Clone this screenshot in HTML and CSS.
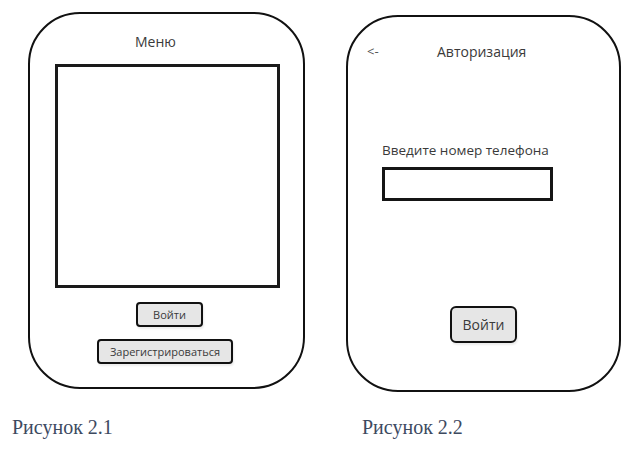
FILE: index.html
```html
<!DOCTYPE html>
<html lang="ru">
<head>
<meta charset="utf-8">
<link rel="stylesheet" href="styles.css">
</head>
<body>
<div class="page">
  <div class="fig fig1">
    <div class="phone phone1">
      <div class="title">Меню</div>
      <div class="square"></div>
      <div class="btn btn-login">Войти</div>
      <div class="btn btn-reg">Зарегистрироваться</div>
    </div>
  </div>
  <div class="fig fig2">
    <div class="phone phone2">
      <div class="header">
        <span class="back">&lt;-</span>
        <span class="title2">Авторизация</span>
      </div>
      <div class="label">Введите номер телефона</div>
      <div class="input"></div>
      <div class="btn btn-login2">Войти</div>
    </div>
  </div>
  <div class="caption cap1">Рисунок 2.1</div>
  <div class="caption cap2">Рисунок 2.2</div>
</div>
</body>
</html>
```
FILE: styles.css
```css
* { box-sizing: border-box; }
html, body { margin: 0; padding: 0; background: #fff; }
body { width: 637px; height: 450px; overflow: hidden; font-family: "Open Sans", "DejaVu Sans", sans-serif; color: #3a3a3a; }
.page {
  display: grid;
  grid-template-columns: 346px 291px;
  grid-template-rows: 400px 50px;
}
.fig { display: flex; align-items: flex-start; }
.phone {
  border: 2.5px solid #111;
  border-radius: 52px;
  display: flex;
  flex-direction: column;
  align-items: center;
  background: #fff;
}
.phone1 { margin: 12px 0 0 28px; width: 277px; height: 377px; padding-top: 18px; }
.phone2 { margin: 15px 0 0 0; width: 275px; height: 377px; padding-top: 22px; align-items: stretch; }
.title { font-size: 14px; line-height: 20px; height: 20px; margin-left: -22px; }
.square {
  margin-top: 12px;
  width: 225px; height: 224px;
  border: 3px solid #1a1a1a;
  margin-left: 2px;
}
.btn {
  border: 2.5px solid #111;
  border-radius: 4px;
  background: #e6e6e6;
  font-size: 11px;
  display: flex; align-items: center; justify-content: center;
  box-shadow: 1px 2px 2px rgba(0,0,0,0.08);
}
.btn-login { margin-top: 14px; width: 67px; height: 25px; margin-left: 6px; }
.btn-reg { margin-top: 12px; width: 136px; height: 25px; margin-left: -3px; }
.header { display: flex; align-items: center; height: 24px; padding-left: 19px; }
.back { font-size: 13px; width: 70px; color: #555; }
.title2 { font-size: 14px; }
.label { font-size: 13.5px; margin: 78px 0 0 34px; line-height: 18px; }
.input { margin: 8px 0 0 34px; width: 171px; height: 34px; border: 3px solid #151515; }
.btn-login2 { align-self: center; margin-top: 105px; width: 67px; height: 37px; font-size: 14px; border-radius: 6px; margin-left: 0; }
.caption {
  font-family: "Liberation Serif", "Times New Roman", serif;
  font-size: 20px;
  color: #3d4a5f;
  padding-top: 16px;
}
.cap1 { padding-left: 12px; }
.cap2 { padding-left: 16px; }
```
